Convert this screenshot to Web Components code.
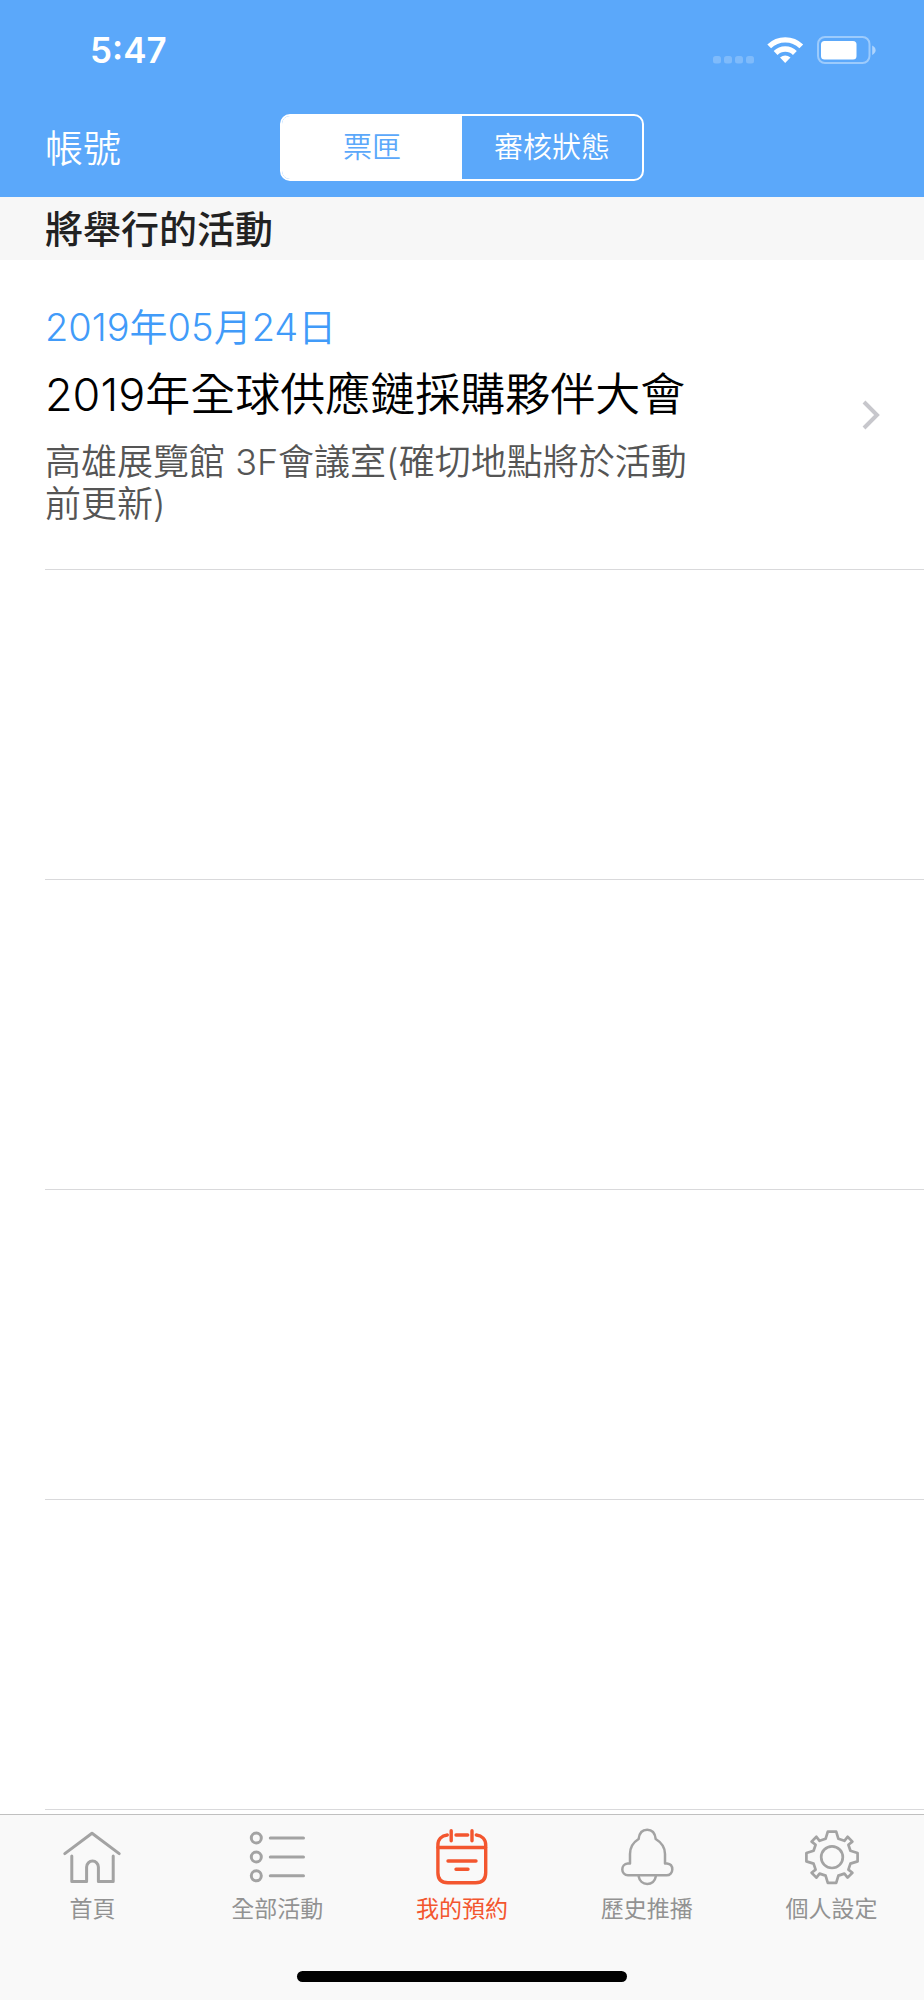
<!DOCTYPE html>
<html lang="zh-Hant">
<head>
  <meta charset="utf-8">
  <meta name="viewport" content="width=device-width, initial-scale=1">
  <title>我的預約</title>
  <style>
    body {
      margin: 0;
      background: #fff;
      font-family: Inter, "Noto Sans CJK TC", sans-serif;
    }
  </style>
</head>
<body>
  <ticket-app>
    <status-bar slot="top" time="5:47"></status-bar>
    <nav-bar slot="top">
      帳號
      <segmented-control slot="title" items="票匣,審核狀態" selected="0"></segmented-control>
    </nav-bar>
    <section-title>將舉行的活動</section-title>
    <event-row href="#event">
      <span slot="date">2019年05月24日</span>
      <span slot="name">2019年全球供應鏈採購夥伴大會</span>
      <span slot="place">高雄展覽館 3F會議室(確切地點將於活動前更新)</span>
    </event-row>
    <event-row></event-row>
    <event-row></event-row>
    <event-row></event-row>
    <event-row></event-row>
    <tab-bar slot="bottom">
      <tab-item icon="home" href="#home">首頁</tab-item>
      <tab-item icon="list" href="#events">全部活動</tab-item>
      <tab-item icon="calendar" href="#booking" active>我的預約</tab-item>
      <tab-item icon="bell" href="#history">歷史推播</tab-item>
      <tab-item icon="gear" href="#settings">個人設定</tab-item>
    </tab-bar>
  </ticket-app>

  <script>
    class TicketApp extends HTMLElement {
      connectedCallback() {
        this.attachShadow({ mode: 'open' }).innerHTML = `
          <style>
            :host {
              display: flex;
              flex-direction: column;
              height: 100vh;
            }
            header {
              background: #5ba8fa;
              color: #fff;
            }
            main {
              flex: 1;
              min-height: 0;
              overflow: hidden;
            }
          </style>
          <header><slot name="top"></slot></header>
          <main><slot></slot></main>
          <slot name="bottom"></slot>
        `;
      }
    }

    class StatusBar extends HTMLElement {
      connectedCallback() {
        this.attachShadow({ mode: 'open' }).innerHTML = `
          <style>
            :host {
              display: flex;
              align-items: center;
              justify-content: space-between;
              height: 100px;
              padding: 0 48px 0 90px;
            }
            .time {
              font-size: 35px;
              font-weight: 600;
              line-height: 44px;
            }
            .icons {
              display: flex;
              align-items: flex-end;
              gap: 13px;
            }
            svg {
              display: block;
            }
          </style>
          <span class="time">${this.getAttribute('time')}</span>
          <div class="icons">
            <svg width="41" height="28" viewBox="0 0 41 28" fill="#fff" fill-opacity=".22">
              <rect x="0" y="20" width="8" height="7.5" rx="2.5"/>
              <rect x="11" y="20" width="8" height="7.5" rx="2.5"/>
              <rect x="22" y="20" width="8" height="7.5" rx="2.5"/>
              <rect x="33" y="20" width="8" height="7.5" rx="2.5"/>
            </svg>
            <svg width="37" height="28" viewBox="0 0 37 28" fill="none" stroke="#fff" stroke-width="5.4">
              <path d="M2.2 10.4a23 23 0 0 1 32.1 0"/>
              <path d="M8.6 17a13.6 13.6 0 0 1 19.3 0"/>
              <path d="M13 21.6Q18.2 17.2 23.5 21.6L18.2 27z" fill="#fff" stroke="none"/>
            </svg>
            <svg width="59" height="28" viewBox="0 0 59 28" fill="#fff">
              <rect x="1" y="1" width="51.5" height="26" rx="7" fill="none" stroke="#fff" stroke-opacity=".4" stroke-width="2"/>
              <rect x="4" y="5" width="35.5" height="18.5" rx="3.5"/>
              <path d="M55.2 9.5q3.4 1.8 3.4 4.7t-3.4 4.7z" fill-opacity=".5"/>
            </svg>
          </div>
        `;
      }
    }

    class NavBar extends HTMLElement {
      connectedCallback() {
        this.attachShadow({ mode: 'open' }).innerHTML = `
          <style>
            :host {
              display: grid;
              grid-template-columns: 1fr auto 1fr;
              align-items: center;
              height: 95px;
              padding: 0 45px 2px;
            }
            button {
              justify-self: start;
              padding: 0;
              border: 0;
              background: none;
              color: inherit;
              font: inherit;
              font-size: 38px;
              font-weight: 350;
              line-height: 48px;
            }
          </style>
          <button type="button"><slot></slot></button>
          <slot name="title"></slot>
        `;
      }
    }

    class SegmentedControl extends HTMLElement {
      connectedCallback() {
        const selected = Number(this.getAttribute('selected'));
        this.attachShadow({ mode: 'open' }).innerHTML = `
          <style>
            :host {
              display: grid;
              grid-template-columns: 1fr 1fr;
              width: 360px;
              border: 2px solid #fff;
              border-radius: 10px;
              overflow: hidden;
            }
            button {
              padding: 0;
              border: 0;
              background: none;
              color: #fff;
              font: inherit;
              font-size: 29px;
              font-weight: 350;
              line-height: 63px;
            }
            button[aria-pressed="true"] {
              background: #fff;
              color: #5ba8fa;
            }
          </style>
          ${this.getAttribute('items')
            .split(',')
            .map((item, i) => `<button type="button" aria-pressed="${i === selected}">${item}</button>`)
            .join('')}
        `;
      }
    }

    class SectionTitle extends HTMLElement {
      connectedCallback() {
        this.attachShadow({ mode: 'open' }).innerHTML = `
          <style>
            :host {
              display: block;
              padding: 1px 45px 0;
              background: #f7f7f7;
              color: #222;
            }
            h2 {
              margin: 0;
              font-size: 38px;
              font-weight: 500;
              line-height: 62px;
            }
          </style>
          <h2><slot></slot></h2>
        `;
      }
    }

    class EventRow extends HTMLElement {
      connectedCallback() {
        const href = this.getAttribute('href');
        this.attachShadow({ mode: 'open' }).innerHTML = `
          <style>
            :host {
              display: block;
              box-sizing: border-box;
              height: 310px;
              margin-left: 45px;
              border-bottom: 1px solid #d9d9db;
            }
            a {
              display: flex;
              align-items: center;
              justify-content: space-between;
              height: 100%;
              padding-right: 44px;
              color: #000;
              text-decoration: none;
            }
            .text {
              display: grid;
              gap: 18px;
              max-width: 78%;
            }
            .date {
              color: #419bf9;
              font-size: 38px;
              line-height: 44px;
            }
            .name {
              font-size: 45px;
              line-height: 56px;
            }
            .place {
              color: #555;
              font-size: 36px;
              line-height: 42px;
            }
            .date,
            .name,
            .place {
              font-weight: 350;
            }
          </style>
          ${href ? `
            <a href="${href}">
              <div class="text">
                <div class="date"><slot name="date"></slot></div>
                <div class="name"><slot name="name"></slot></div>
                <div class="place"><slot name="place"></slot></div>
              </div>
              <svg width="18" height="30" viewBox="0 0 18 30" fill="none" stroke="#c7c7cc" stroke-width="4">
                <path d="M2 2L15 15L2 28"/>
              </svg>
            </a>
          ` : ''}
        `;
      }
    }

    class TabBar extends HTMLElement {
      connectedCallback() {
        this.attachShadow({ mode: 'open' }).innerHTML = `
          <style>
            :host {
              display: flex;
              flex-direction: column;
              justify-content: space-between;
              align-items: center;
              box-sizing: border-box;
              height: 186px;
              padding: 14px 0 18px;
              border-top: 1px solid #c0c0c0;
              background: #f9f9f9;
            }
            nav {
              display: grid;
              grid-template-columns: repeat(5, 1fr);
              width: 100%;
            }
            .indicator {
              width: 330px;
              height: 11px;
              border-radius: 6px;
              background: #000;
            }
          </style>
          <nav><slot></slot></nav>
          <div class="indicator"></div>
        `;
      }
    }

    const icons = {
      home: `
        <path d="M.8 24.6L28 4.2L55.2 24.6"/>
        <path d="M7.8 27V52.4H22.6V38a5.9 5.9 0 0 1 11.8 0V52.4H49.2V27"/>
      `,
      list: `
        <circle cx="7.3" cy="9" r="5"/>
        <circle cx="7.3" cy="28" r="5"/>
        <circle cx="7.3" cy="46.8" r="5"/>
        <path d="M21.3 9H54.5M21.3 28H54.5M21.3 46.8H54.5"/>
      `,
      calendar: `
        <path d="M13.3 6C7.5 6.6 3.9 10.5 3.9 16V43.7Q3.9 53.7 13.9 53.7H41.7Q51.7 53.7 51.7 43.7V16C51.7 10.5 48 6.6 42.3 6"/>
        <path d="M17.2 1.8V11.8M38 1.8V11.8M22 6H33.7M4 18.5H51.6M14 32H42M22 40.3H34"/>
      `,
      bell: `
        <path d="M19.6 10C20.3 4 23.5 .8 28.2 .8S36 4 36.7 10C42.5 13.5 46 18 46 25V34.5H48C51.5 34.8 53.3 37.5 53.3 40.5S51 46.3 47.5 46.3H9C5.5 46.3 3.3 43.5 3.3 40.5S5.2 34.8 8.7 34.5H11V25C11 18 14 13.5 19.6 10Z"/>
        <path d="M19.7 47.5C20.5 52 23.8 55 28.2 55S36 52 36.8 47.5"/>
      `,
      gear: `
        <circle cx="28" cy="28.2" r="10.8"/>
        <path transform="translate(28 28.2)" d="M-4.2-25.6H4.2L6.4-18.4L12.4-16.4L15.6-20.4L20.4-15.6L16.4-12.4L18.4-6.4L25.6-4.2V4.2L18.4 6.4L16.4 12.4L20.4 15.6L15.6 20.4L12.4 16.4L6.4 18.4L4.2 25.6H-4.2L-6.4 18.4L-12.4 16.4L-15.6 20.4L-20.4 15.6L-16.4 12.4L-18.4 6.4L-25.6 4.2V-4.2L-18.4-6.4L-16.4-12.4L-20.4-15.6L-15.6-20.4L-12.4-16.4L-6.4-18.4Z"/>
      `,
    };

    const iconWidths = { home: 3, list: 3, calendar: 3.4, bell: 2.5, gear: 2.7 };

    class TabItem extends HTMLElement {
      connectedCallback() {
        const icon = this.getAttribute('icon');
        this.attachShadow({ mode: 'open' }).innerHTML = `
          <style>
            :host {
              display: block;
              --icon: #a3a3a3;
              color: #929292;
            }
            :host([active]) {
              --icon: #f3562f;
              color: #f3562f;
            }
            a {
              display: flex;
              flex-direction: column;
              align-items: center;
              gap: 9px;
              color: inherit;
              font-size: 23px;
              line-height: 30px;
              text-decoration: none;
            }
            svg {
              display: block;
              overflow: visible;
              stroke: var(--icon);
            }
          </style>
          <a href="${this.getAttribute('href')}">
            <svg width="56" height="56" viewBox="0 0 56 56" fill="none" stroke-width="${iconWidths[icon]}" stroke-linecap="round" stroke-linejoin="round">${icons[icon]}</svg>
            <slot></slot>
          </a>
        `;
      }
    }

    customElements.define('ticket-app', TicketApp);
    customElements.define('status-bar', StatusBar);
    customElements.define('nav-bar', NavBar);
    customElements.define('segmented-control', SegmentedControl);
    customElements.define('section-title', SectionTitle);
    customElements.define('event-row', EventRow);
    customElements.define('tab-bar', TabBar);
    customElements.define('tab-item', TabItem);
  </script>
</body>
</html>
